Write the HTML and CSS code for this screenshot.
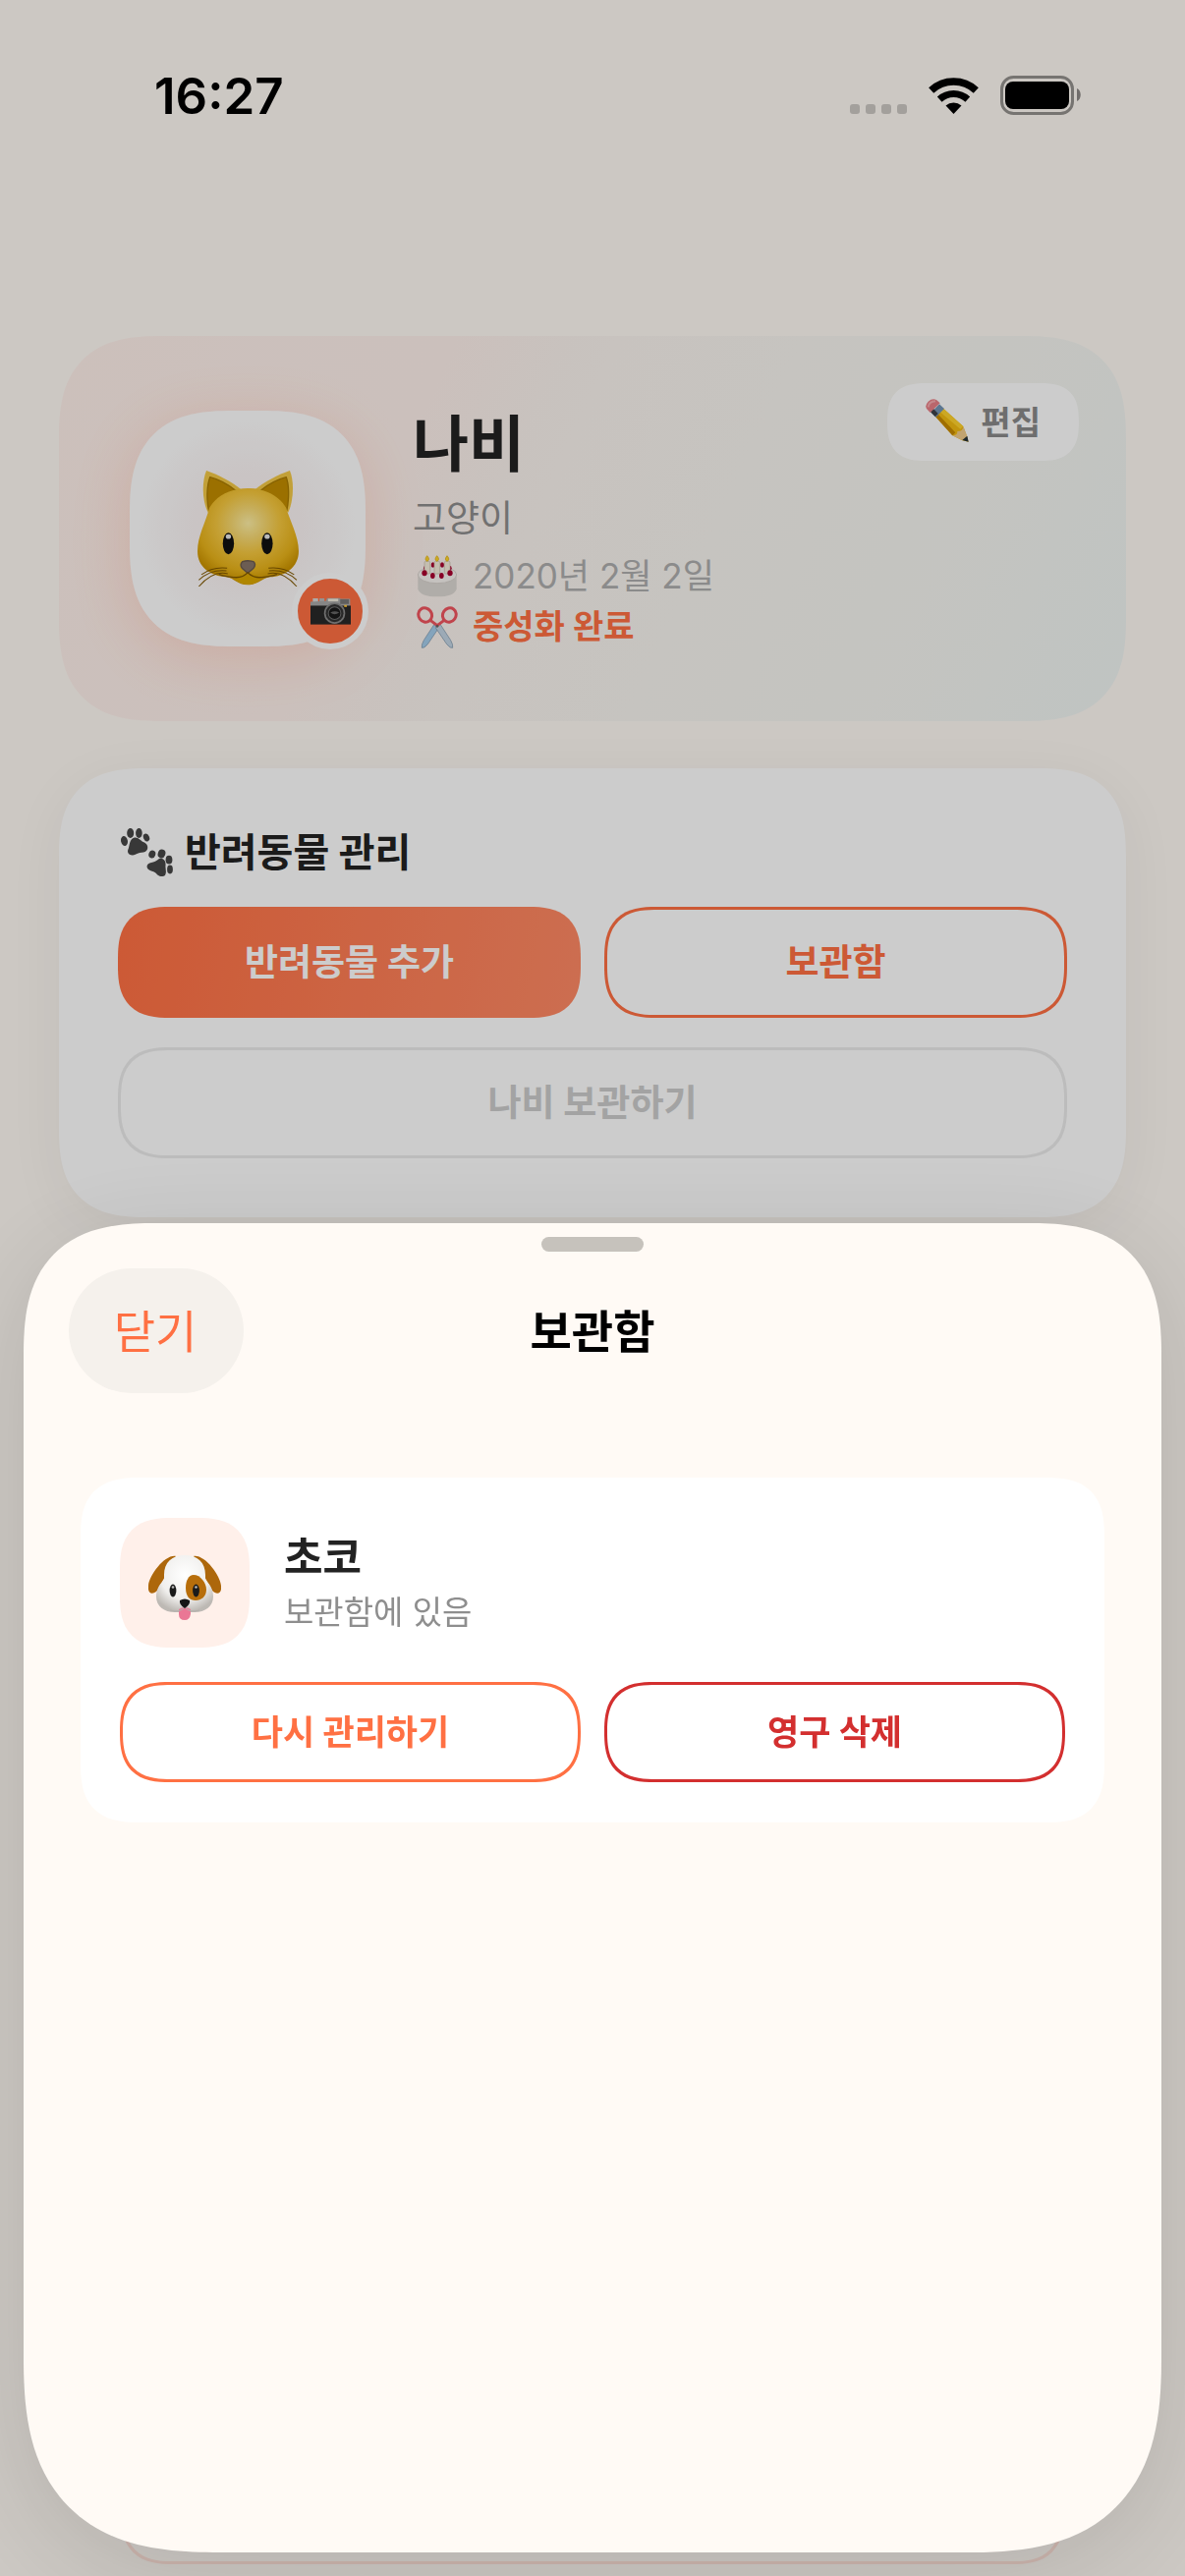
FILE: index.html
```html
<!DOCTYPE html>
<html lang="ko">
<head>
  <meta charset="UTF-8" />
  <meta name="viewport" content="width=device-width, initial-scale=1.0" />
  <title>보관함</title>
  <link rel="stylesheet" href="styles.css">
</head>

<body>

  <div class="app">
    <header class="status-bar">
      <span class="time">16:27</span>
      <div class="status-icons">
        <span class="dots"><i></i><i></i><i></i><i></i></span>
        <svg class="wifi" width="51" height="37" viewBox="0 0 51 37">
          <path d="M2.7 13A33.5 33.5 0 0 1 48.3 13" fill="none" stroke="#000" stroke-width="7.5" />
          <path d="M11.2 22.1A21 21 0 0 1 39.8 22.1" fill="none" stroke="#000" stroke-width="7" />
          <path d="M25.5 37L17.5 28.5A12 12 0 0 1 33.5 28.5Z" />
        </svg>
        <svg width="83" height="40" viewBox="0 0 83 40">
          <rect x="1.5" y="1.5" width="72" height="37" rx="12" fill="none" stroke="#000" stroke-opacity=".42" stroke-width="3" />
          <rect x="5" y="6" width="65" height="28" rx="8" />
          <path d="M78 13C83 15 83 24 78 26Z" fill-opacity=".45" />
        </svg>
      </div>
    </header>

    <main class="content">
      <section class="hero">
        <div class="avatar">
          <svg width="103" height="118" viewBox="0 0 308 353">
            <defs>
              <radialGradient id="catFace" cx=".5" cy=".36" r=".62">
                <stop offset="0" stop-color="#fff0a6" />
                <stop offset=".25" stop-color="#f8da74" />
                <stop offset=".5" stop-color="#f6c840" />
                <stop offset=".8" stop-color="#e8b31a" />
                <stop offset="1" stop-color="#cc9400" />
              </radialGradient>
            </defs>
            <path d="M32 128C12 88 14 30 27 0C62 12 104 34 134 58Z" fill="#f3c947" />
            <path d="M276 128C294 88 294 30 281 0C246 12 204 34 174 58Z" fill="#f3c947" />
            <path d="M34 120C26 80 30 40 38 20C70 28 98 46 118 62Z" fill="#c28d00" stroke="#a87a00" stroke-width="4" />
            <path d="M272 120C280 80 278 40 270 20C238 28 210 46 190 62Z" fill="#c28d00" stroke="#a87a00" stroke-width="4" />
            <path d="M153 54C205 54 250 78 270 114C280 150 308 200 308 245C308 295 265 322 220 324C195 328 185 348 153 348C121 348 113 328 88 324C40 320 0 295 0 245C0 200 24 160 36 114C56 78 100 54 153 54Z" fill="url(#catFace)" />
            <path d="M108 326Q153 304 198 326Q180 347 153 347Q126 347 108 326Z" fill="#dda800" />
            <ellipse cx="94" cy="222" rx="17" ry="33" fill="#111" />
            <ellipse cx="212" cy="222" rx="17" ry="33" fill="#111" />
            <ellipse cx="94" cy="201" rx="8" ry="7" fill="#e8e8e8" />
            <ellipse cx="212" cy="201" rx="8" ry="7" fill="#e8e8e8" />
            <path d="M137 277Q153 272 170 277Q180 286 170 298L153 312L136 298Q127 286 137 277Z" fill="#877568" stroke="#6a5a4f" stroke-width="4" />
            <g fill="none" stroke="#805800" stroke-width="3">
              <path d="M153 310Q138 328 110 325T65 316M153 310Q168 328 196 325T242 316" stroke-width="4" />
              <path d="M90 297Q45 292 12 317M88 305Q40 300 4 333M92 314Q48 303 4 353" />
              <path d="M216 297Q261 292 294 317M218 305Q266 300 302 333M214 314Q258 303 302 353" />
            </g>
          </svg>
          <button class="camera-btn" aria-label="사진 변경">
            <svg width="41" height="28" viewBox="0 0 122 83">
              <rect x="7" y="3" width="16" height="12" fill="#d8d8d8" />
              <rect x="27" y="3" width="15" height="12" fill="#b9b9b9" />
              <path d="M0 13L46 11L50 2H90V4H120V28H0Z" fill="#a8a8a8" />
              <rect x="53" y="4" width="31" height="8" fill="#f1ebdd" />
              <rect x="90" y="6" width="26" height="14" fill="#777" />
              <rect y="25" width="122" height="57" fill="#292929" />
              <rect x="102" y="23" width="8" height="6" fill="#ffc83c" />
              <circle cx="73" cy="48" r="32" fill="#8a8a8a" />
              <circle cx="73" cy="48" r="27" fill="#333" />
              <circle cx="73" cy="48" r="19" fill="#191919" stroke="#707070" stroke-width="3" />
              <path d="M60 46Q74 38 87 46Q73 56 60 46Z" fill="#666" />
            </svg>
          </button>
        </div>

        <div class="info">
          <h1 class="pet-name">나비</h1>
          <p class="species">고양이</p>
          <p class="fact">
            <svg width="42" height="43" viewBox="0 0 126 129">
              <path d="M4 58V104Q12 127 63 127T122 104V58Z" fill="#ddd9d4" />
              <ellipse cx="63" cy="60" rx="59" ry="26" fill="#f7f3ef" stroke="#cbc5c0" stroke-width="2" />
              <g fill="#a9002f">
                <ellipse cx="50" cy="30" rx="6" ry="8" /><ellipse cx="78" cy="30" rx="6" ry="8" />
                <ellipse cx="27" cy="40" rx="6" ry="8" /><ellipse cx="101" cy="40" rx="6" ry="8" />
              </g>
              <g fill="#f6eedc" stroke="#c7bda9" stroke-width="2">
                <rect x="24" y="19" width="17" height="38" rx="4" />
                <rect x="54" y="19" width="17" height="38" rx="4" />
                <rect x="85" y="19" width="17" height="38" rx="4" />
              </g>
              <g fill="#ffd62e" stroke="#dba900" stroke-width="2">
                <path d="M32 2Q43 14 32 19Q22 14 32 2Z" />
                <path d="M62 2Q73 14 62 19Q52 14 62 2Z" />
                <path d="M93 2Q104 14 93 19Q83 14 93 2Z" />
              </g>
              <g fill="#a9002f">
                <ellipse cx="24" cy="55" rx="8" ry="9" /><ellipse cx="49" cy="63" rx="7" ry="9" />
                <ellipse cx="76" cy="63" rx="7" ry="9" /><ellipse cx="102" cy="55" rx="8" ry="9" />
              </g>
            </svg>
            2020년 2월 2일
          </p>
          <p class="fact neutered">
            <svg width="42" height="43" viewBox="0 0 126 129">
              <path d="M56 52L68 66L34 116Q22 130 16 127Q14 118 22 104Z" fill="#a5cdec" stroke="#7892a8" stroke-width="2" />
              <path d="M70 52L58 66L92 116Q104 130 110 127Q112 118 104 104Z" fill="#c3d5e4" stroke="#7892a8" stroke-width="2" />
              <g fill="none" stroke="#f0555f" stroke-width="9">
                <ellipse cx="26" cy="27" rx="20" ry="22" transform="rotate(-35 26 27)" />
                <ellipse cx="100" cy="27" rx="20" ry="22" transform="rotate(35 100 27)" />
                <path d="M42 43L66 61M84 43L60 61" />
              </g>
              <circle cx="63" cy="61" r="4" fill="#666" />
            </svg>
            중성화 완료
          </p>
        </div>

        <button class="edit-btn">
          <svg width="44" height="44" viewBox="0 0 132 132">
            <path d="M30 54L54 29L115 84L126 113L131 131L112 127L82 112Z" fill="#f2bb12" />
            <path d="M44 40L54 29L115 84L106 92Z" fill="#ffd22e" />
            <path d="M30 54L37 46L91 103L82 112Z" fill="#c78a00" />
            <path d="M115 84L127 115L113 127L82 112Q98 112 97 99Q115 99 115 84Z" fill="#f2cc8c" />
            <path d="M127 113L131 131L112 126Z" fill="#26323a" />
            <path d="M17 42L42 16L57 30L31 56Z" fill="#7394b5" />
            <path d="M12 37L22 28L38 45L29 54Z" fill="#3c4149" />
            <path d="M3 30Q-3 20 8 8Q22 -4 34 4L44 13L14 42Z" fill="#e98087" />
            <path d="M8 25Q10 8 30 7" fill="none" stroke="#f7aaaf" stroke-width="6" />
          </svg>
          편집
        </button>
      </section>

      <section class="card">
        <h2 class="card-title">
          <svg width="53" height="49" viewBox="0 0 53 49" fill="#464646">
            <ellipse cx="3.5" cy="13" rx="3.4" ry="5" transform="rotate(-12 3.5 13)" />
            <ellipse cx="9.7" cy="5" rx="3.5" ry="5" />
            <ellipse cx="18.4" cy="5" rx="3.3" ry="5" />
            <ellipse cx="26" cy="9.5" rx="3" ry="4" transform="rotate(-25 26 9.5)" />
            <path d="M14 9.5C18 9 20 13 24 14.5C29 17 28 24 23 24.5C17 25 15 27 12 27.5C7 27 6 24 8 20C9 15 10 10 14 9.5Z" />
            <ellipse cx="31.8" cy="26.5" rx="3.4" ry="4" transform="rotate(20 31.8 26.5)" />
            <ellipse cx="41.5" cy="26" rx="3.8" ry="4.4" transform="rotate(20 41.5 26)" />
            <ellipse cx="49" cy="32.2" rx="3.4" ry="4.4" />
            <ellipse cx="50" cy="42" rx="2.9" ry="4.4" />
            <path d="M39 31C43 30 46 33 45.5 38C45 41 47 44 45 48C42 50 38 49 36 46C33 43 27 44 26.5 39C27 34 34 36 39 31Z" />
          </svg>
          반려동물 관리
        </h2>
        <div class="btn-row">
          <button class="btn btn-primary">반려동물 추가</button>
          <button class="btn btn-outline">보관함</button>
        </div>
        <button class="btn btn-muted" disabled>나비 보관하기</button>
      </section>
    </main>

    <button class="btn btn-leave" aria-label="계정"></button>
  </div>

  <div class="backdrop">
    <section class="sheet" role="dialog" aria-labelledby="sheetTitle">
      <div class="grabber"></div>
      <header class="sheet-header">
        <button class="close-btn">닫기</button>
        <h2 id="sheetTitle">보관함</h2>
      </header>

      <article class="archived">
        <div class="archived-info">
          <div class="archived-avatar">
            <svg width="74" height="66" viewBox="0 0 74 66">
              <defs>
                <radialGradient id="dogFace" cx=".5" cy=".35" r=".65">
                  <stop offset="0" stop-color="#fff" />
                  <stop offset=".65" stop-color="#f0efed" />
                  <stop offset="1" stop-color="#bdb9b4" />
                </radialGradient>
              </defs>
              <path d="M28 1C17 -1 1 20 0 31C-1 39 4 41 9 36L19 18Z" fill="#ad670b" />
              <path d="M46 1C57 -1 73 20 74 31C75 39 70 41 65 36L55 18Z" fill="#ad670b" />
              <path d="M37 0C50 0 58 7 58 20V25C62 29 66 34 66 42C66 52 58 58 47 58H27C16 58 8 52 8 42C8 34 12 29 16 25V20C16 7 24 0 37 0Z" fill="url(#dogFace)" />
              <path d="M46 20C53 20 59 28 59 35C59 42 54 46 48 46C42 46 38 42 38 33C38 26 41 20 46 20Z" fill="#b76e0b" />
              <ellipse cx="25" cy="36" rx="3.4" ry="6.5" fill="#1b1b1b" />
              <ellipse cx="48.5" cy="36" rx="3.4" ry="6.5" fill="#1b1b1b" />
              <circle cx="25" cy="32.5" r="1.3" fill="#bbb" />
              <circle cx="48.5" cy="32.5" r="1.3" fill="#bbb" />
              <path d="M31 55Q37 51 43 55V60Q42 66 37 66Q31 66 31 60Z" fill="#ea7795" />
              <path d="M22 56Q32 59 37 53Q42 59 52 56" fill="none" stroke="#b5b1ad" stroke-width="1" />
              <path d="M32 46Q37 43 42 46Q43 50 37 54Q31 50 32 46Z" fill="#151515" />
            </svg>
          </div>
          <div>
            <h3 class="archived-name">초코</h3>
            <p class="archived-state">보관함에 있음</p>
          </div>
        </div>
        <div class="btn-row">
          <button class="btn btn-small btn-outline">다시 관리하기</button>
          <button class="btn btn-small btn-danger">영구 삭제</button>
        </div>
      </article>
    </section>
  </div>

</body>
</html>
```
FILE: styles.css
```css
* {
  box-sizing: border-box;
}

body {
  margin: 0;
  background: #fffaf4;
  color: #222;
  font-family: Inter, 'Noto Sans CJK KR', sans-serif;
}

h1,
h2,
h3,
p {
  margin: 0;
}

button {
  font-family: inherit;
  cursor: pointer;
}

svg {
  display: block;
  flex: none;
}

.app {
  height: 100vh;
  display: flex;
  flex-direction: column;
  overflow: hidden;
}

/* status bar */
.status-bar {
  height: 194px;
  padding: 0 105px 0 157px;
  display: flex;
  justify-content: space-between;
  align-items: center;
  color: #000;
}

.time {
  font-size: 51px;
  font-weight: 600;
}

.status-icons {
  display: flex;
  align-items: center;
  gap: 22px;
}

.dots {
  display: flex;
  gap: 6px;
  padding-top: 27px;
}

.dots i {
  width: 10px;
  height: 10px;
  border-radius: 3px;
  background: rgba(0, 0, 0, 0.2);
}

/* main page */
.content {
  padding: 148px 60px 0;
  display: flex;
  flex-direction: column;
  gap: 48px;
}

.hero {
  position: relative;
  display: flex;
  align-items: center;
  gap: 48px;
  padding: 72px;
  border-radius: 105px;
  corner-shape: superellipse(1.4);
  background: linear-gradient(115deg, #fff0ea 0%, #fef1ec 32%, #faf4ef 45%, #f6f6f1 75%, #f0f5f3 100%);
}

.avatar {
  position: relative;
  width: 240px;
  height: 240px;
  display: flex;
  justify-content: center;
  align-items: center;
  border-radius: 105px;
  corner-shape: superellipse(1.4);
  background: radial-gradient(circle, #fbeeee 0%, #fdf9f9 45%, #fff 65%);
  box-shadow: 0 12px 60px rgba(255, 112, 67, 0.2);
}

.camera-btn {
  position: absolute;
  right: -3px;
  bottom: -3px;
  width: 78px;
  height: 78px;
  padding: 0;
  display: flex;
  justify-content: center;
  align-items: center;
  border: 6px solid #fff;
  border-radius: 50%;
  background: #ff7043;
}

.pet-name {
  font-size: 62px;
  line-height: 78px;
  font-weight: 700;
}

.species {
  margin-top: 10px;
  font-size: 37px;
  line-height: 52px;
  color: #8e8e8e;
}

.fact {
  margin-top: 8px;
  padding-left: 4px;
  display: flex;
  align-items: center;
  gap: 15px;
  font-size: 35px;
  line-height: 48px;
  color: #aeaeae;
}

.neutered {
  margin-top: 4px;
  color: #ff7043;
  font-size: 34px;
  font-weight: 700;
}

.edit-btn {
  position: absolute;
  top: 48px;
  right: 48px;
  height: 79px;
  padding: 0 39px 3px;
  display: flex;
  align-items: center;
  gap: 12px;
  border: none;
  border-radius: 45px;
  corner-shape: superellipse(1.4);
  background: #fff;
  color: #8a8a8a;
  font-size: 33px;
  font-weight: 700;
}

.card {
  display: flex;
  flex-direction: column;
  gap: 30px;
  padding: 60px;
  border-radius: 90px;
  corner-shape: superellipse(1.4);
  background: #fff;
  box-shadow: 0 12px 60px rgba(0, 0, 0, 0.05);
}

.card-title {
  padding-left: 3px;
  display: flex;
  align-items: center;
  gap: 12px;
  font-size: 40px;
  line-height: 51px;
  font-weight: 700;
}

/* buttons */
.btn-row {
  display: flex;
  gap: 24px;
}

.btn {
  height: 113px;
  padding: 0 0 5px;
  border: 3px solid transparent;
  border-radius: 53px;
  corner-shape: superellipse(1.4);
  background: transparent;
  font-size: 37px;
  font-weight: 700;
}

.btn-row .btn {
  flex: 1;
}

.btn-small {
  height: 102px;
  font-size: 35px;
}

.btn-primary {
  background: linear-gradient(100deg, #ff7043, #ff8a65) border-box;
  color: #fff;
}

.btn-outline {
  border-color: #ff7043;
  color: #ff7043;
}

.btn-danger {
  border-color: #d32f2f;
  color: #d32f2f;
}

.btn-muted {
  border-color: #ececec;
  color: #ccc;
}

.btn-leave {
  flex: none;
  margin: auto 123px 12px;
  border-color: #ffe2d9;
}

/* bottom sheet */
.backdrop {
  position: fixed;
  inset: 0;
  padding: 24px;
  display: flex;
  flex-direction: column;
  justify-content: flex-end;
  background: rgba(0, 0, 0, 0.2);
}

.sheet {
  height: calc(50vh + 42px);
  padding-top: 14px;
  border-radius: 135px 135px 200px 200px;
  corner-shape: superellipse(1.4);
  background: #fffaf5;
  box-shadow: 0 20px 110px rgba(0, 0, 0, 0.12);
}

.grabber {
  width: 104px;
  height: 15px;
  margin: 0 auto;
  border-radius: 8px;
  background: #c6c2bc;
}

.sheet-header {
  margin-top: 17px;
  padding: 0 46px;
  display: grid;
  grid-template-columns: 1fr auto 1fr;
  align-items: center;
}

.sheet-header h2 {
  padding-bottom: 6px;
  color: #000;
  font-size: 46px;
  font-weight: 600;
}

.close-btn {
  width: 178px;
  height: 127px;
  padding: 0 2px 6px 0;
  border: none;
  border-radius: 64px;
  background: #f5f1ec;
  color: #ff7043;
  font-size: 46px;
}

.archived {
  margin: 86px 58px 0;
  padding: 41px 40px;
  border-radius: 60px;
  corner-shape: superellipse(1.4);
  background: #fff;
}

.archived-info {
  display: flex;
  align-items: center;
  gap: 35px;
  margin-bottom: 35px;
}

.archived-avatar {
  width: 132px;
  height: 132px;
  padding-top: 9px;
  display: flex;
  justify-content: center;
  align-items: center;
  border-radius: 53px;
  corner-shape: superellipse(1.4);
  background: #fff0ea;
}

.archived-name {
  font-size: 43px;
  line-height: 56px;
  font-weight: 700;
}

.archived-state {
  margin-top: 4px;
  font-size: 33px;
  line-height: 48px;
  color: #8e8e8e;
}
```
